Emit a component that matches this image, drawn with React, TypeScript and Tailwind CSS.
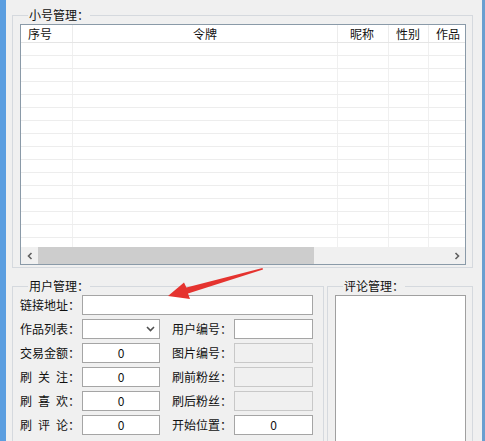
import React from "react";

const font = { fontFamily: '"Noto Sans CJK SC", "Liberation Sans", sans-serif' };

const columns = [
  { name: "序号", w: "w-[52px]", align: "text-left pl-[7px]" },
  { name: "令牌", w: "w-[265px]", align: "text-center" },
  { name: "昵称", w: "w-[51px]", align: "text-left pl-[12px]" },
  { name: "性别", w: "w-[40px]", align: "text-left pl-[7px]" },
  { name: "作品", w: "w-[40px]", align: "text-left pl-[7px]" },
];

function TextBox({ value, disabled, className = "" }: { value?: string; disabled?: boolean; className?: string }) {
  return (
    <div
      className={`h-[20px] shrink-0 border flex items-center justify-center text-[12px] text-[#111] ${
        disabled ? "bg-[#f0f0f0] border-[#c8c8c8]" : "bg-white border-[#a5a5a5]"
      } ${className}`}
    >
      {value}
    </div>
  );
}

function Label({ text, className = "" }: { text: string; className?: string }) {
  return <span className={`shrink-0 text-[12px] leading-[20px] text-[#111] whitespace-pre ${className}`}>{text}</span>;
}

export default function App() {
  return (
    <div className="relative flex h-[441px] w-[485px] overflow-hidden bg-[#f0f0f0]" style={font}>
      {/* window frame left */}
      <div className="w-[6px] shrink-0 bg-[#5b9ee0]" />

      <div className="min-w-0 flex-1 pl-[6px] pr-[9px] pt-[7px]">
        {/* 小号管理 */}
        <fieldset className="min-w-0 border border-[#d5d9de] pl-[7px] pr-[6px] pb-[2px]">
          <legend className="ml-[8px] px-[1px] text-[12px] leading-[16px] text-[#111]">小号管理：</legend>
          <div className="mt-[1px] flex h-[241px] flex-col overflow-hidden border border-[#8a9aa8] bg-white">
            {/* header */}
            <div className="flex h-[18px] shrink-0 border-b border-[#e5e5e5] text-[12px] leading-[17px] text-[#111]">
              {columns.map(c => (
                <div key={c.name} className={`${c.w} ${c.align} shrink-0 border-r border-[#ececec]`}>
                  {c.name}
                </div>
              ))}
            </div>
            {/* body */}
            <div className="relative flex-1 overflow-hidden">
              <div className="flex h-full">
                {columns.map(c => (
                  <div key={c.name} className={`${c.w} shrink-0 border-r border-[#f0f0f0]`} />
                ))}
              </div>
              <div className="absolute inset-0 flex flex-col">
                {Array.from({ length: 16 }).map((_, i) => (
                  <div key={i} className="h-[13px] shrink-0 border-b border-[#ededed]" />
                ))}
              </div>
            </div>
            {/* horizontal scrollbar */}
            <div className="flex h-[17px] shrink-0 items-center bg-[#f0f0f0]">
              <div className="flex w-[17px] shrink-0 justify-center">
                <svg width="8" height="8" viewBox="0 0 8 8">
                  <path d="M5.5 1 L2.5 4 L5.5 7" fill="none" stroke="#606060" strokeWidth="1.6" />
                </svg>
              </div>
              <div className="h-[17px] w-[276px] shrink-0 bg-[#cdcdcd]" />
              <div className="flex-1" />
              <div className="flex w-[17px] shrink-0 justify-center">
                <svg width="8" height="8" viewBox="0 0 8 8">
                  <path d="M2.5 1 L5.5 4 L2.5 7" fill="none" stroke="#606060" strokeWidth="1.6" />
                </svg>
              </div>
            </div>
          </div>
        </fieldset>

        <div className="mt-[10px] flex gap-[3px]">
          {/* 用户管理 */}
          <fieldset className="w-[312px] min-w-0 shrink-0 border border-[#d5d9de] pl-[7px] pr-[9px] pb-[6px]">
            <legend className="ml-[8px] px-[1px] text-[12px] leading-[16px] text-[#111]">用户管理：</legend>
            <div className="mt-[1px] flex flex-col gap-[4px]">
              <div className="flex">
                <Label text="链接地址：" className="w-[62px]" />
                <TextBox className="w-[231px]" />
              </div>
              <div className="flex">
                <Label text="作品列表：" className="w-[62px]" />
                <div className="flex h-[20px] w-[78px] shrink-0 items-center justify-end border border-[#a5a5a5] bg-white pr-[4px]">
                  <svg width="9" height="6" viewBox="0 0 9 6">
                    <path d="M1 1 L4.5 4.5 L8 1" fill="none" stroke="#505050" strokeWidth="1.6" />
                  </svg>
                </div>
                <Label text="用户编号：" className="ml-[12px] w-[62px]" />
                <TextBox className="w-[79px]" />
              </div>
              <div className="flex">
                <Label text="交易金额：" className="w-[62px]" />
                <TextBox value="0" className="w-[78px]" />
                <Label text="图片编号：" className="ml-[12px] w-[62px]" />
                <TextBox disabled className="w-[79px]" />
              </div>
              <div className="flex">
                <Label text={"刷\u2002关\u2002注："} className="w-[62px]" />
                <TextBox value="0" className="w-[78px]" />
                <Label text="刷前粉丝：" className="ml-[12px] w-[62px]" />
                <TextBox disabled className="w-[79px]" />
              </div>
              <div className="flex">
                <Label text={"刷\u2002喜\u2002欢："} className="w-[62px]" />
                <TextBox value="0" className="w-[78px]" />
                <Label text="刷后粉丝：" className="ml-[12px] w-[62px]" />
                <TextBox disabled className="w-[79px]" />
              </div>
              <div className="flex">
                <Label text={"刷\u2002评\u2002论："} className="w-[62px]" />
                <TextBox value="0" className="w-[78px]" />
                <Label text="开始位置：" className="ml-[12px] w-[62px]" />
                <TextBox value="0" className="w-[79px]" />
              </div>
            </div>
          </fieldset>

          {/* 评论管理 */}
          <fieldset className="min-w-0 flex-1 border border-[#d5d9de] pl-[7px] pr-[6px]">
            <legend className="ml-[8px] px-[1px] text-[12px] leading-[16px] text-[#111]">评论管理：</legend>
            <div className="mt-[1px] h-[160px] border border-[#a0a0a0] bg-white" />
          </fieldset>
        </div>
      </div>

      {/* window frame right */}
      <div className="w-[3px] shrink-0 bg-[#6a9fd0]" />

      {/* red annotation arrow */}
      <svg className="pointer-events-none absolute left-0 top-0" width="485" height="441" viewBox="0 0 485 441">
        <polygon
          points="168,296 190,299 188,293.4 263,269.6 262.5,268 186.4,287.6 184,282.5"
          fill="#e5332f"
        />
      </svg>
    </div>
  );
}
